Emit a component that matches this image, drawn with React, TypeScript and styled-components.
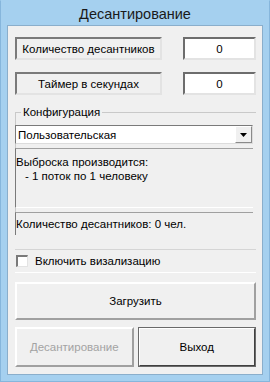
import styled, { createGlobalStyle } from 'styled-components';

const GlobalStyle = createGlobalStyle`
  html, body {
    margin: 0;
    padding: 0;
    background: #ffffff;
  }
  body {
    font-family: 'Liberation Sans', Arial, sans-serif;
    font-size: 11.5px;
    color: #000;
  }
`;

const App = () => {
  return (
    <>
      <GlobalStyle />
      <Window>
        <TitleBar>Десантирование</TitleBar>
        <Client>
          <FieldRow>
            <LabelBox>Количество десантников</LabelBox>
            <NumberBox>0</NumberBox>
          </FieldRow>
          <FieldRow>
            <LabelBox>Таймер в секундах</LabelBox>
            <NumberBox>0</NumberBox>
          </FieldRow>

          <Group>
            <GroupTitle>Конфигурация</GroupTitle>
            <Combo>
              <ComboText>Пользовательская</ComboText>
              <ComboButton>
                <svg width="7" height="4" viewBox="0 0 7 4">
                  <path d="M0 0h7L3.5 4z" fill="#000" />
                </svg>
              </ComboButton>
            </Combo>
            <InfoPanel>
              <InfoLine>Выброска производится:</InfoLine>
              <InfoLine $indent>- 1 поток по 1 человеку</InfoLine>
            </InfoPanel>
            <CountPanel>Количество десантников: 0 чел.</CountPanel>
          </Group>

          <CheckGroup>
            <CheckBox />
            <CheckLabel>Включить визализацию</CheckLabel>
          </CheckGroup>

          <Button $wide>Загрузить</Button>
          <ButtonRow>
            <Button $disabled>Десантирование</Button>
            <Button $default>Выход</Button>
          </ButtonRow>
        </Client>
      </Window>
    </>
  );
};

export default App;

const Window = styled.div`
  width: 270px;
  height: 382px;
  box-sizing: border-box;
  background: #a5d0ef;
  border: 1px solid #86b6dc;
  border-top-color: #a5d0ef;
  display: flex;
  flex-direction: column;
  padding: 0 6px 6px 6px;
`;

const TitleBar = styled.div`
  height: 24px;
  line-height: 26px;
  text-align: center;
  font-size: 14.5px;
  color: #1a1a1a;
`;

const Client = styled.div`
  flex: 1;
  background: #f0f0f0;
  border: 1px solid #8aaecb;
  display: flex;
  flex-direction: column;
  padding: 11px 6px 0 7px;
`;

const FieldRow = styled.div`
  display: flex;
  justify-content: space-between;
  height: 23px;
  margin-bottom: 12px;
`;

const LabelBox = styled.div`
  width: 147px;
  box-sizing: border-box;
  border: 2px solid #f0f0f0;
  border-top-color: #7a7a7a;
  border-left-color: #7a7a7a;
  border-right-color: #e3e3e3;
  border-bottom-color: #e3e3e3;
  background: #f0f0f0;
  display: flex;
  align-items: center;
  justify-content: center;
`;

const NumberBox = styled.div`
  width: 73px;
  box-sizing: border-box;
  background: #fff;
  border: 2px solid #e3e3e3;
  border-top-color: #6d6d6d;
  border-left-color: #6d6d6d;
  display: flex;
  align-items: center;
  justify-content: center;
`;

const Group = styled.div`
  position: relative;
  margin-top: 5px;
  border-top: 1px solid #c9c9c9;
  border-left: 1px solid #c9c9c9;
  display: flex;
  flex-direction: column;
  padding-top: 12px;
`;

const GroupTitle = styled.span`
  position: absolute;
  top: -8px;
  left: 5px;
  padding: 0 2px;
  background: #f0f0f0;
  line-height: 14px;
`;

const Combo = styled.div`
  height: 19px;
  margin-right: 3px;
  margin-left: -1px;
  box-sizing: border-box;
  background: #fff;
  border: 1px solid #7a7a7a;
  border-right-color: #dcdcdc;
  border-bottom-color: #dcdcdc;
  display: flex;
  align-items: stretch;
`;

const ComboText = styled.div`
  flex: 1;
  padding-left: 2px;
  display: flex;
  align-items: center;
`;

const ComboButton = styled.div`
  width: 15px;
  background: #f0f0f0;
  border: 1px solid #fff;
  border-right-color: #8a8a8a;
  border-bottom-color: #8a8a8a;
  display: flex;
  align-items: center;
  justify-content: center;
`;

const InfoPanel = styled.div`
  margin-top: 4px;
  margin-left: -1px;
  margin-right: 3px;
  height: 60px;
  box-sizing: border-box;
  border-top: 1px solid #a0a0a0;
  border-left: 1px solid #7a7a7a;
  border-bottom: 1px solid #ffffff;
  padding-top: 6px;
  display: flex;
  flex-direction: column;
`;

const InfoLine = styled.div<{ $indent?: boolean }>`
  line-height: 14px;
  padding-left: ${p => (p.$indent ? '9px' : '0')};
`;

const CountPanel = styled.div`
  margin-top: 4px;
  margin-left: -1px;
  margin-right: 3px;
  height: 23px;
  box-sizing: border-box;
  border-top: 1px solid #a0a0a0;
  border-left: 1px solid #7a7a7a;
  display: flex;
  align-items: center;
`;

const CheckGroup = styled.div`
  margin-top: 14px;
  height: 24px;
  box-sizing: border-box;
  border-top: 1px solid #d5d5d5;
  border-bottom: 1px solid #ffffff;
  display: flex;
  align-items: center;
  gap: 7px;
`;

const CheckBox = styled.div`
  width: 12px;
  height: 12px;
  box-sizing: border-box;
  margin-left: 1px;
  background: #fff;
  border: 1px solid #e3e3e3;
  border-top: 2px solid #7a7a7a;
  border-left: 2px solid #7a7a7a;
`;

const CheckLabel = styled.span`
  font-size: 11.5px;
`;

const ButtonRow = styled.div`
  display: flex;
  gap: 4px;
  margin-top: 7px;
`;

const Button = styled.div<{ $wide?: boolean; $disabled?: boolean; $default?: boolean }>`
  ${p => (p.$wide ? 'margin-top: 9px;' : 'flex: 1;')}
  height: ${p => (p.$wide ? '38px' : '40px')};
  box-sizing: border-box;
  background: #f0f0f0;
  border: 2px solid #ffffff;
  border-right-color: ${p => (p.$default ? '#404040' : '#a0a0a0')};
  border-bottom-color: ${p => (p.$default ? '#404040' : '#a0a0a0')};
  ${p => (p.$default ? 'outline: 1px solid #6a6a6a; outline-offset: -1px;' : '')}
  display: flex;
  align-items: center;
  justify-content: center;
  color: ${p => (p.$disabled ? '#a3a3a3' : '#000')};
`;
